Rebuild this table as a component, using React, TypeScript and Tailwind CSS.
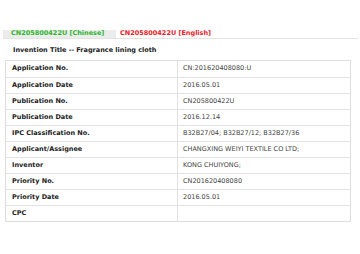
const rows: [string, string][] = [
  ["Application No.", "CN:201620408080:U"],
  ["Application Date", "2016.05.01"],
  ["Publication No.", "CN205800422U"],
  ["Publication Date", "2016.12.14"],
  ["IPC Classification No.", "B32B27/04; B32B27/12; B32B27/36"],
  ["Applicant/Assignee", "CHANGXING WEIYI TEXTILE CO LTD;"],
  ["Inventor", "KONG CHUIYONG;"],
  ["Priority No.", "CN201620408080"],
  ["Priority Date", "2016.05.01"],
  ["CPC", ""],
];

export default function App() {
  return (
    <div className="w-[360px] h-[254px] bg-white font-['DejaVu_Sans',sans-serif] text-[6.5px] text-[#333]">
      <div className="pt-[30px] pl-[3px] pr-[2px]">
        <div className="flex items-stretch border-b border-[#e4e4e4] h-[9px]">
          <div className="bg-[#ececec] w-[113px] pl-[8px] flex items-center font-bold text-[#2db52d]">
            CN205800422U [Chinese]
          </div>
          <div className="pl-[4px] flex items-center font-bold text-[#e8202a]">
            CN205800422U [English]
          </div>
        </div>
      </div>
      <div className="pl-[13px] pt-[7px] h-[21px] font-bold text-[#222]">
        Invention Title -- Fragrance lining cloth
      </div>
      <div className="ml-[5px] w-[346px] border border-[#dedede]">
        {rows.map(([k, v], i) => (
          <div
            key={k}
            className={"flex h-[16px] " + (i > 0 ? "border-t border-[#e2e2e2]" : "")}
          >
            <div className="w-[172px] border-r border-[#e2e2e2] pl-[6px] flex items-center font-bold text-[#222]">
              {k}
            </div>
            <div className="flex-1 pl-[5px] flex items-center text-[#444]">{v}</div>
          </div>
        ))}
      </div>
    </div>
  );
}
